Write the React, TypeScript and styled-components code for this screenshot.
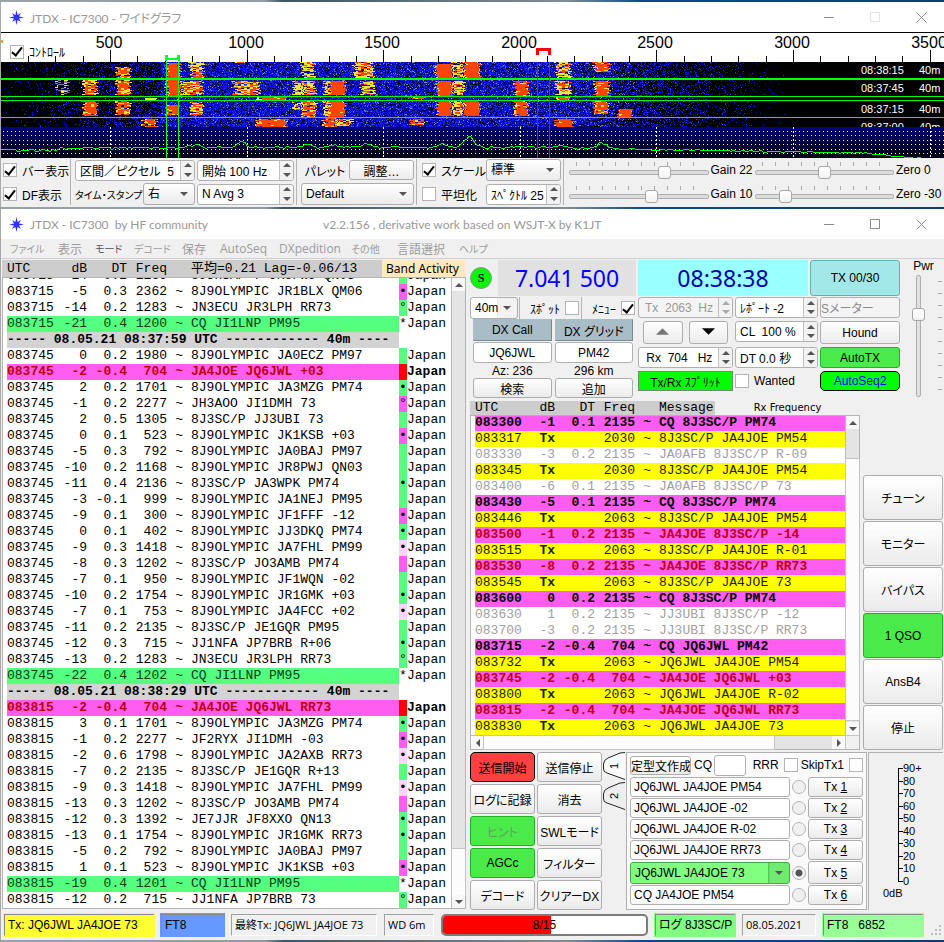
import React, { useState } from "react";
import styled, { createGlobalStyle, css } from "styled-components";

const UI = `"MS UI Gothic", "Liberation Sans", "Noto Sans CJK JP", sans-serif`;
const CAPTION = `"Segoe UI", "Open Sans", "Noto Sans CJK JP", sans-serif`;
const TITLE = `"Segoe UI", Lato, "Noto Sans CJK JP", sans-serif`;
const MONO = `"Courier New", "Liberation Mono", "Noto Sans CJK JP", monospace`;

const GlobalStyle = createGlobalStyle`
  * { box-sizing: border-box; }
  body { margin: 0; background: #3b4a5a; }
  body, button, input, select { font-family: ${UI}; font-size: 12px; font-feature-settings: "palt"; color: #000; }
`;

/* ---------- shell ---------- */

const Desktop = styled.div`
  height: 100vh;
  min-height: 900px;
  display: flex;
  flex-direction: column;
  gap: 2px;
  padding: 2px 0;
  background: linear-gradient(90deg, #9aa3a5 0%, #8f9da6 28%, #3e5568 30%, #7f8e96 60%, #0c4a8c 68%, #0f3c74 100%);
  overflow: hidden;
`;

const WindowFrame = styled.section<{ $grow?: boolean }>`
  display: flex;
  flex-direction: column;
  background: #f0f0f0;
  border-left: 1px solid #a8a8a8;
  min-height: 0;
  flex: ${(p) => (p.$grow ? "1" : "none")};
`;

const TitleBar = styled.header`
  display: grid;
  grid-template-columns: 15px minmax(0, 287px) 1fr auto;
  column-gap: 6px;
  align-items: center;
  height: 30px;
  padding-left: 8px;
  background: #fff;
  color: #999;
  font-family: ${TITLE};
  font-size: 12px;
  white-space: pre;
`;

const WinButtons = styled.div`
  display: flex;
`;

const WinButton = styled.button<{ $dim?: boolean }>`
  width: 46px;
  height: 28px;
  padding: 0;
  border: 0;
  background: none;
  display: grid;
  place-items: center;
  color: ${(p) => (p.$dim ? "#e4e4e4" : "#8a8a8a")};
`;

/* ---------- generic controls ---------- */

type Tone = "plain" | "green" | "lime" | "red" | "cyan" | "steel" | "split";

const tones: Record<Tone, ReturnType<typeof css>> = {
  plain: css`background: linear-gradient(#fff, #ebebeb); border-color: #adadad;`,
  green: css`background: #4aea4a; border-color: #22b322;`,
  lime: css`background: #00ff00; border-color: #000; color: #0000ff; border-radius: 5px;`,
  red: css`background: #ff4040; border-color: #000; border-radius: 5px;`,
  cyan: css`background: #a3e8e8; border-color: #5cb3b3;`,
  steel: css`background: #a9bdc6; border-color: #a9bdc6 #7b8a91 #7b8a91 #a9bdc6; border-radius: 0;`,
  split: css`background: #00ff00; border-color: #6b8f6b; border-radius: 0;`,
};

const PushButton = styled.button<{ $tone?: Tone; $faded?: boolean }>`
  min-width: 0;
  padding: 0;
  border: 1px solid;
  border-radius: 3px;
  white-space: nowrap;
  overflow: hidden;
  ${(p) => tones[p.$tone ?? "plain"]}
  ${(p) => p.$faded && css`color: #5fa35f;`}
`;

const TextBox = styled.input<{ $center?: boolean }>`
  width: 100%;
  min-width: 0;
  height: 21px;
  padding: 0 3px;
  border: 1px solid #b0b0b0;
  border-radius: 3px;
  background: #fff;
  text-align: ${(p) => (p.$center ? "center" : "left")};
  &:disabled { background: #f4f4f4; color: #8a8a8a; padding: 0; }
`;

const CheckInput = styled.input`
  appearance: none;
  flex: none;
  width: 14px;
  height: 14px;
  margin: 0;
  border: 1px solid #b4b4b4;
  background: #fff;
  display: grid;
  place-items: center;
  &:checked::after {
    content: "";
    width: 4px;
    height: 9px;
    margin-top: -2px;
    border: solid #000;
    border-width: 0 2px 2px 0;
    transform: rotate(38deg);
  }
`;

const CheckLabel = styled.label`
  display: flex;
  align-items: center;
  gap: 5px;
  white-space: nowrap;
`;

const SpinFrame = styled.div<{ $off?: boolean }>`
  display: flex;
  min-width: 0;
  height: 21px;
  border: 1px solid #b0b0b0;
  border-radius: 3px;
  background: ${(p) => (p.$off ? "#f4f4f4" : "#fff")};
  overflow: hidden;
`;

const SpinInput = styled.input`
  flex: 1;
  width: 0;
  min-width: 0;
  padding: 0 0 0 4px;
  border: 0;
  background: none;
  white-space: pre;
  &:disabled { color: #999; padding-left: 6px; }
`;

const Stepper = styled.div`
  width: 14px;
  flex: none;
  display: flex;
  flex-direction: column;
  border-left: 1px solid #c0c0c0;
  background: #f2f2f2;
`;

const StepButton = styled.button`
  flex: 1;
  padding: 0;
  border: 0;
  background: none;
  display: grid;
  place-items: center;
  line-height: 0;
`;

const Triangle = ({ dir, size = 8, color = "#555" }: { dir: "up" | "down" | "left" | "right"; size?: number; color?: string }) => {
  const shapes = { up: "M0 6 4 2 8 6z", down: "M0 2 4 6 8 2z", left: "M6 0 2 4 6 8z", right: "M2 0 6 4 2 8z" };
  return (
    <svg width={size} height={size} viewBox="0 0 8 8" aria-hidden="true">
      <path d={shapes[dir]} fill={color} />
    </svg>
  );
};

const Spin = ({ label, value, off }: { label: string; value: string; off?: boolean }) => (
  <SpinFrame $off={off}>
    <SpinInput aria-label={label} defaultValue={value} disabled={off} />
    <Stepper>
      <StepButton aria-label={`${label} +`}><Triangle dir="up" color={off ? "#aaa" : "#555"} /></StepButton>
      <StepButton aria-label={`${label} -`}><Triangle dir="down" color={off ? "#aaa" : "#555"} /></StepButton>
    </Stepper>
  </SpinFrame>
);

const SelectFrame = styled.div<{ $go?: boolean; $split?: boolean }>`
  display: grid;
  grid-template-columns: minmax(0, 1fr) 21px;
  align-items: center;
  height: 22px;
  min-width: 0;
  border: 1px solid ${(p) => (p.$go ? "#3fae3f" : "#adadad")};
  border-radius: 3px;
  background: ${(p) => (p.$split ? "linear-gradient(90deg, #fff 56%, #c0c0c0 56%, #f2f2f2 58%)" : "linear-gradient(#fff, #ebebeb)")};
  & > svg { grid-area: 1 / 2; justify-self: center; pointer-events: none; }
  ${(p) => p.$go && css`background: linear-gradient(90deg, #80ff80 87%, #52c852 87%, #70ea70 88%);`}
`;

const Select = styled.select`
  appearance: none;
  grid-area: 1 / 1 / 2 / 3;
  width: 100%;
  height: 100%;
  padding: 0 0 0 4px;
  border: 0;
  background: none;
`;

const Combo = ({ label, value, go, split }: { label: string; value: string; go?: boolean; split?: boolean }) => (
  <SelectFrame $go={go} $split={split}>
    <Select aria-label={label}><option>{value}</option></Select>
    <Triangle dir="down" />
  </SelectFrame>
);

/* ---------- wide graph ---------- */

const GraphSvg = styled.svg`
  display: block;
  width: 100%;
  height: 126px;
`;

const GraphArea = styled.div`
  position: relative;
  background: #fff;
`;

const GraphToggle = styled.div`
  position: absolute;
  left: 9px;
  top: 11px;
`;

const makeRng = (seed: number) => () => {
  seed = (seed * 1664525 + 1013904223) >>> 0;
  return seed / 4294967296;
};

const PALETTE = ["#000078", "#0a14dc", "#1e3cff", "#7c86a0", "#f0e43c", "#ff4600"];

type Blob = [x0: number, x1: number, y0: number, y1: number, heat: number];

const SIGNALS: Blob[] = [
  [115, 129, 67, 78, 0.8], [165, 179, 63, 79, 1], [189, 202, 62, 71, 0.4], [189, 202, 71, 78, 0.75], [301, 313, 62, 78, 0.4],
  [353, 372, 62, 78, 0.5], [434, 451, 64, 78, 1], [452, 462, 62, 78, 0.45], [463, 479, 62, 78, 1], [555, 569, 62, 78, 0.45],
  [593, 608, 62, 72, 0.9], [236, 246, 62, 63, 0.9],
  [55, 67, 80, 95, 0.15], [82, 96, 80, 95, 0.7], [115, 129, 80, 95, 0.8], [165, 179, 80, 96, 1], [180, 201, 81, 95, 0.6],
  [232, 258, 81, 95, 0.6], [292, 301, 81, 95, 0.4], [302, 314, 81, 95, 0.55], [323, 328, 81, 95, 0.5], [328, 344, 81, 95, 1],
  [360, 373, 81, 95, 0.45], [435, 451, 81, 96, 1], [452, 463, 81, 95, 0.45], [513, 527, 81, 96, 0.95], [555, 569, 81, 95, 0.5],
  [593, 608, 81, 96, 0.9],
  [256, 286, 97, 100, 0.85], [555, 569, 97, 100, 0.9], [410, 425, 97, 99, 0.8], [144, 156, 97, 100, 0.3],
  [82, 96, 101, 116, 0.88], [115, 129, 101, 115, 0.65], [165, 178, 105, 115, 0.98], [189, 202, 102, 115, 0.65], [292, 300, 102, 110, 0.4],
  [301, 315, 101, 117, 0.7], [323, 328, 101, 116, 0.5], [328, 344, 101, 117, 0.98], [436, 451, 101, 116, 1], [452, 462, 101, 116, 0.45],
  [463, 479, 101, 116, 1], [513, 527, 101, 116, 0.9], [593, 607, 101, 114, 0.9], [617, 631, 109, 117, 0.98],
  [142, 156, 119, 127, 0.92], [256, 286, 119, 127, 0.88], [323, 335, 118, 127, 0.85], [336, 351, 119, 126, 0.45],
  [410, 425, 119, 125, 0.75], [555, 573, 119, 127, 0.97],
];

const noiseLevel = (x: number) => {
  if (x < 160) return 0.03 + 0.45 * Math.pow(x / 160, 1.6);
  if (x < 570) return 0.88;
  if (x < 800) return 0.88 * Math.pow((800 - x) / 230, 1.7);
  return 0;
};

const buildWaterfall = () => {
  const rand = makeRng(7300);
  const runs: string[] = PALETTE.map(() => "");
  for (let y = 62; y < 127; y++) {
    const edge = Math.round(rand() * 4 - 2);
    let prev = -1;
    let start = 0;
    let warm = 0;
    for (let x = 0; x <= 943; x++) {
      let c = -1;
      const level = x < 943 ? noiseLevel(x) : 0;
      if (rand() < level) {
        const r = rand();
        c = r < 0.28 ? 0 : r < 0.82 ? 1 : r < 0.94 ? 2 : level > 0.5 ? 3 : 0;
      }
      if (x % 3 === 0) warm = rand();
      for (const [x0, x1, y0, y1, heat] of SIGNALS) {
        if (y < y0 || y >= y1 || x < x0 + edge || x >= x1 + edge) continue;
        const rim = Math.min(x - x0 - edge, x1 + edge - x) < 2 ? 0.3 : 0;
        const h = Math.pow(Math.max(0, heat - rim), 1.5);
        if (heat < 0.2) c = warm < 0.2 ? 4 : warm < 0.5 ? 3 : c;
        else if (warm < h) c = 5;
        else if (warm < h + (1 - h) * 0.75) c = 4;
      }
      if (c !== prev || x === 943) {
        if (prev >= 0) runs[prev] += `M${start} ${y}h${x - start}v1h-${x - start}z`;
        prev = c;
        start = x;
      }
    }
  }
  return runs;
};

const buildTrace = () => {
  const rand = makeRng(42);
  const peaks = [[194, 3, 6], [241, 6, 5], [308, 3, 5], [334, 2, 6], [366, 4, 5], [441, 3, 6], [468, 10, 7], [562, 3, 5], [601, 6, 6]];
  let d = "";
  for (let x = 0; x < 925; x += 2) {
    let y = x < 60 ? 150 : x < 560 ? 148 - Math.min(1, (x - 60) / 200) : 148 + ((x - 560) / 260) * 4;
    if (x > 860) y += (x - 860) / 12;
    for (const [px, h, w] of peaks) y -= h * Math.exp(-Math.pow((x - px) / w, 2));
    y += rand() * 2 - 1;
    d += `${d ? "L" : "M"}${x} ${Math.min(158, Math.round(y))}`;
  }
  return d;
};

const WATERFALL = buildWaterfall();
const TRACE = buildTrace();
const MAJORS = [500, 1000, 1500, 2000, 2500, 3000, 3500];
const hzToX = (hz: number) => Math.round(109 + ((hz - 500) * 136.6) / 500);
const TICKS = Array.from({ length: 34 }, (_, i) => 200 + i * 100);
const STAMPS: [string, number][] = [["08:38:15", 74], ["08:37:45", 92], ["08:37:15", 113], ["08:37:00", 131]];

const WideGraph = () => (
  <GraphSvg viewBox="0 32 943 126" preserveAspectRatio="none" role="img" aria-label="Waterfall">
    <defs>
      <linearGradient id="floor" x1="0" y1="0" x2="0" y2="1">
        <stop offset="0" stopColor="#00007c" />
        <stop offset="1" stopColor="#00000c" />
      </linearGradient>
      <clipPath id="fallClip"><rect x="0" y="62" width="943" height="65" /></clipPath>
    </defs>
    <rect x="0" y="32" width="943" height="30" fill="#fff" />
    <rect x="0" y="32" width="943" height="1" fill="#000" />
    <rect x="0" y="40" width="2" height="3" fill="#ff9c00" />
    <g fontFamily="Liberation Sans" fontSize="16" textAnchor="middle">
      {MAJORS.map((hz) => <text key={hz} x={hzToX(hz) - 1} y="48">{hz}</text>)}
    </g>
    <g shapeRendering="crispEdges">
      {TICKS.map((hz) => (
        <rect key={hz} x={hzToX(hz)} y={hz % 500 ? 56 : 50} width="1" height={hz % 500 ? 6 : 12} />
      ))}
      <rect x="0" y="62" width="943" height="65" fill="#000" />
      {WATERFALL.map((d, i) => <path key={i} d={d} fill={PALETTE[i]} />)}
      <rect x="0" y="127" width="943" height="31" fill="url(#floor)" />
      {[131, 135, 140, 144, 149, 153].map((y) => (
        <line key={y} x1="2" x2="943" y1={y + 0.5} y2={y + 0.5} stroke="#fff" strokeDasharray="1 3" />
      ))}
      {MAJORS.map((hz) => (
        <line key={hz} x1={hzToX(hz) + 0.5} x2={hzToX(hz) + 0.5} y1="127" y2="158" stroke="#fff" strokeDasharray="2 2" />
      ))}
      <path d={TRACE} fill="none" stroke="#00ff00" />
      <rect x="0" y="78" width="943" height="2" fill="#00ff00" />
      {[96, 100, 117].map((y) => <rect key={y} x="0" y={y} width="943" height="1" fill="#00ff00" />)}
      <path d="M164 61v-6h3v3h9v-3h3v6h-2v-1h-11v1z" fill="#00ff28" />
      <path d="M165 62h1v96h-1zM177 62h1v96h-1z" fill="#00ff00" />
      <path d="M535 55v-7h15v7h-3v-4h-9v4z" fill="#ff0000" />
      <path d="M536 62h1v96h-1zM548 62h1v96h-1z" fill="#d01818" />
    </g>
    <g clipPath="url(#fallClip)" fill="#fff" fontFamily="Liberation Sans" fontSize="11">
      {STAMPS.map(([t, y]) => (
        <React.Fragment key={t}>
          <text x="860" y={y}>{t}</text>
          <text x="918" y={y}>40m</text>
        </React.Fragment>
      ))}
    </g>
  </GraphSvg>
);

const GraphControls = styled.div`
  display: flex;
  padding: 1px 0 2px;
  height: 49px;
`;

const ControlGroup = styled.div<{ $cols: string; $pad: number }>`
  display: grid;
  grid-template-columns: ${(p) => p.$cols};
  grid-template-rows: 22px 22px;
  row-gap: 2px;
  column-gap: 2px;
  align-items: center;
  padding: 0 2px 0 ${(p) => p.$pad}px;
  border-left: 1px solid #b4b4b4;
  white-space: nowrap;
  &:first-child { border-left: 0; }
  &:last-child { flex: 1; }
`;

const SmallCaption = styled.span`
  font-size: 10px;
`;

const CenterCaption = styled.span`
  text-align: center;
`;

const Pair = styled.div<{ $cols: string }>`
  display: grid;
  grid-template-columns: ${(p) => p.$cols};
  align-items: center;
  & > button { height: 20px; }
`;

const SliderBox = styled.div`
  padding: 4px 0 0;
  background: repeating-linear-gradient(90deg, #aaa 0 1px, transparent 1px 13px) 7px 2px / calc(100% - 12px) 4px no-repeat;
`;

const thumb = css`
  appearance: none;
  width: 13px;
  height: 13px;
  border: 1px solid #a8a8a8;
  border-radius: 3px;
  background: linear-gradient(#fff, #f2f2f2);
`;

const Range = styled.input`
  appearance: none;
  display: block;
  width: 100%;
  height: 16px;
  margin: 0;
  background: none;
  &::-webkit-slider-runnable-track {
    height: 5px;
    border: 1px solid #b0b0b0;
    border-radius: 2px;
    background: #dcdcdc;
  }
  &::-webkit-slider-thumb { ${thumb} margin-top: -5px; }
`;

const Gain = ({ label, value }: { label: string; value: number }) => (
  <SliderBox><Range type="range" aria-label={label} min={0} max={100} defaultValue={value} /></SliderBox>
);

/* ---------- main window ---------- */

const MenuBar = styled.nav`
  display: grid;
  grid-template-columns: 48px 37px 39px 48px 38px 59px 72px 46px 62px 1fr;
  align-items: center;
  height: 20px;
  padding-left: 9px;
  border-bottom: 1px solid #d0d0d0;
  font-family: ${CAPTION};
  white-space: nowrap;
`;

const MenuItem = styled.button<{ $live?: boolean; $kana?: boolean }>`
  padding: 0;
  border: 0;
  background: none;
  text-align: left;
  font-family: inherit;
  font-size: ${(p) => (p.$kana ? 10 : 12)}px;
  color: ${(p) => (p.$live ? "#555" : "#9c9c9c")};
`;

const Body = styled.main`
  flex: 1;
  min-height: 0;
  display: grid;
  grid-template-columns: minmax(0, 1fr) 478px;
`;

const Column = styled.div`
  display: flex;
  flex-direction: column;
  min-height: 0;
  min-width: 0;
`;

const LogHead = styled.div<{ $narrow?: boolean }>`
  display: grid;
  grid-template-columns: 48px 32px 40px 40px 24px minmax(0, 1fr);
  align-items: center;
  height: ${(p) => (p.$narrow ? 14 : 17)}px;
  padding-left: 5px;
  background: #cdcdcd;
  font-family: ${MONO};
  font-size: 13px;
  line-height: 14px;
  white-space: pre;
  ${(p) => (p.$narrow ? css`width: 245px;` : css`flex: 1;`)}
`;

const HeadCell = styled.span<{ $right?: boolean }>`
  height: 14px;
  text-align: ${(p) => (p.$right ? "right" : "left")};
`;

const HeadRow = styled.div`
  display: flex;
  margin: 1px 1px 0 1px;
`;

const BandTag = styled.span`
  width: 83px;
  padding-left: 4px;
  background: #ffe9bd;
  font-family: "Noto Sans", sans-serif;
  font-size: 12px;
  line-height: 17px;
  white-space: nowrap;
`;

const LogBox = styled.div`
  flex: 1;
  min-height: 0;
  margin-left: 1px;
  display: grid;
  grid-template-columns: minmax(0, 1fr) 14px;
  grid-template-rows: minmax(0, 1fr) auto;
  border: 1px solid #b4b4b4;
  background: #fff;
`;

const LogView = styled.div`
  display: flex;
  flex-direction: column;
  justify-content: flex-end;
  min-height: 0;
  padding-left: 4px;
  overflow: hidden;
`;

const LogTable = styled.table`
  width: 100%;
  table-layout: fixed;
  border-collapse: collapse;
  font-family: ${MONO};
  font-size: 13px;
  line-height: 16px;
  white-space: pre;
`;

type Kind = "" | "cq" | "mine" | "call" | "tx" | "old" | "sep";

const kinds: Record<Kind, ReturnType<typeof css>> = {
  "": css``,
  cq: css`background: #55ff7f; color: #0c3c18;`,
  mine: css`background: #ff5df0; color: #c00010; font-weight: bold;`,
  call: css`background: #ff5df0; font-weight: bold;`,
  tx: css`background: #ffff00; color: #1c1c00;`,
  old: css`color: #a0a0a0;`,
  sep: css`background: #d3d3d3; font-weight: bold;`,
};

const Cell = styled.td<{ $kind: Kind; $left?: boolean; $bold?: boolean }>`
  height: 16px;
  padding: 0 0 0 ${(p) => (p.$left ? 8 : 0)}px;
  text-align: ${(p) => (p.$left || p.$kind === "sep" ? "left" : "right")};
  overflow: hidden;
  ${(p) => kinds[p.$kind]}
  ${(p) => p.$bold && css`font-weight: bold;`}
  &:first-child { text-align: left; }
`;

const markColors: Record<string, string> = { g: "#55ff7f", p: "#ff5df0", l: "#ffd5fb", r: "#ff0000", n: "#fff" };

const Mark = styled.td<{ $mark: string }>`
  padding: 0;
  background: ${(p) => markColors[p.$mark]};
`;

const Country = styled.td<{ $bold: boolean }>`
  padding: 0;
  font-weight: ${(p) => (p.$bold ? "bold" : "normal")};
`;

const BAND_LOG = `083715|-14|0.2|1169|8J3HSA/ 7 JR8PWJ QN03|g||
083715|-5|0.3|2362|8J9OLYMPIC JR1BLX QM06|p|•|
083715|-14|0.2|1283|JN3ECU JR3LPH RR73|g|°|
083715|-21|0.4|1200|CQ JI1LNP PM95|n|*|cq
----- 08.05.21 08:37:59 UTC ------------ 40m ----
083745|0|0.2|1980|8J9OLYMPIC JA0ECZ PM97|g||
083745|-2|-0.4|704|JA4JOE JQ6JWL +03|r||mine
083745|2|0.2|1701|8J9OLYMPIC JA3MZG PM74|g|•|
083745|-1|0.2|2277|JH3AOO JI1DMH 73|p|°|
083745|2|0.5|1305|8J3SC/P JJ3UBI 73|g||
083745|0|0.1|523|8J9OLYMPIC JK1KSB +03|p|•|
083745|-5|0.3|792|8J9OLYMPIC JA0BAJ PM97|g||
083745|-10|0.2|1168|8J9OLYMPIC JR8PWJ QN03|g||
083745|-11|0.4|2136|8J3SC/P JA3WPK PM74|g|•|
083745|-3|-0.1|999|8J9OLYMPIC JA1NEJ PM95|g||
083745|-9|0.1|300|8J9OLYMPIC JF1FFF -12|p|•|
083745|0|0.1|402|8J9OLYMPIC JJ3DKQ PM74|g|•|
083745|-9|0.3|1418|8J9OLYMPIC JA7FHL PM99|l|•|
083745|-8|0.3|1202|8J3SC/P JO3AMB PM74|p||
083745|-7|0.1|950|8J9OLYMPIC JF1WQN -02|g||
083745|-10|0.2|1754|8J9OLYMPIC JR1GMK +03|g|•|
083745|-7|0.1|753|8J9OLYMPIC JA4FCC +02|l|•|
083745|-11|0.2|2135|8J3SC/P JE1GQR PM95|g||
083745|-12|0.3|715|JJ1NFA JP7BRB R+06|g|•|
083745|-13|0.2|1283|JN3ECU JR3LPH RR73|g|°|
083745|-22|0.4|1202|CQ JI1LNP PM95|n|*|cq
----- 08.05.21 08:38:29 UTC ------------ 40m ----
083815|-2|-0.4|704|JA4JOE JQ6JWL RR73|r||mine
083815|3|0.1|1701|8J9OLYMPIC JA3MZG PM74|g|•|
083815|-1|0.2|2277|JF2RYX JI1DMH -03|p|•|
083815|-2|0.6|1798|8J9OLYMPIC JA2AXB RR73|l|•|
083815|-7|0.2|2135|8J3SC/P JE1GQR R+13|g||
083815|-9|0.3|1418|8J9OLYMPIC JA7FHL PM99|l|•|
083815|-13|0.3|1202|8J3SC/P JO3AMB PM74|p||
083815|-12|0.3|1392|JE7JJR JF8XXO QN13|g|•|
083815|-13|0.1|1754|8J9OLYMPIC JR1GMK RR73|g|•|
083815|-5|0.2|792|8J9OLYMPIC JA0BAJ PM97|g||
083815|1|0.1|523|8J9OLYMPIC JK1KSB +03|p|•|
083815|-19|0.4|1201|CQ JI1LNP PM95|n|*|cq
083815|-12|0.2|715|JJ1NFA JP7BRB 73|g|°|`.split("\n");

const RX_LOG = `083300|-1|0.1|2135|CQ 8J3SC/P PM74|||call
083317|Tx||2030|8J3SC/P JA4JOE PM54|||tx
083330|-3|0.2|2135|JA0AFB 8J3SC/P R-09|||old
083345|Tx||2030|8J3SC/P JA4JOE PM54|||tx
083400|-6|0.1|2135|JA0AFB 8J3SC/P 73|||old
083430|-5|0.1|2135|CQ 8J3SC/P PM74|||call
083446|Tx||2063|8J3SC/P JA4JOE PM54|||tx
083500|-1|0.2|2135|JA4JOE 8J3SC/P -14|||mine
083515|Tx||2063|8J3SC/P JA4JOE R-01|||tx
083530|-8|0.2|2135|JA4JOE 8J3SC/P RR73|||mine
083545|Tx||2063|8J3SC/P JA4JOE 73|||tx
083600|0|0.2|2135|CQ 8J3SC/P PM74|||call
083630|1|0.2|2135|JJ3UBI 8J3SC/P -12|||old
083700|-3|0.2|2135|JJ3UBI 8J3SC/P RR73|||old
083715|-2|-0.4|704|CQ JQ6JWL PM42|||call
083732|Tx||2063|JQ6JWL JA4JOE PM54|||tx
083745|-2|-0.4|704|JA4JOE JQ6JWL +03|||mine
083800|Tx||2063|JQ6JWL JA4JOE R-02|||tx
083815|-2|-0.4|704|JA4JOE JQ6JWL RR73|||mine
083830|Tx||2063|JQ6JWL JA4JOE 73|||tx`.split("\n");

const Log = ({ rows, label, country }: { rows: string[]; label: string; country?: boolean }) => (
  <LogTable aria-label={label}>
    <colgroup>
      <col width="48" /><col width="32" /><col width="40" /><col width="40" /><col width="16" /><col />
      {country && <><col width="8" /><col width="44" /></>}
    </colgroup>
    <tbody>
      {rows.map((row, i) => {
        const f = row.split("|");
        if (f.length === 1) return <tr key={i}><Cell $kind="sep" colSpan={6}>{row}</Cell></tr>;
        const kind = f[7] as Kind;
        return (
          <tr key={i}>
            <Cell $kind={kind}>{f[0]}</Cell>
            <Cell $kind={kind} $bold={kind === "tx"}>{f[1]}</Cell>
            <Cell $kind={kind}>{f[2]}</Cell>
            <Cell $kind={kind}>{f[3]}</Cell>
            <Cell $kind={kind}>~</Cell>
            <Cell $kind={kind} $left>{f[4]}</Cell>
            {country && <><Mark $mark={f[5]}>{f[6]}</Mark><Country $bold={kind === "mine"}>Japan</Country></>}
          </tr>
        );
      })}
    </tbody>
  </LogTable>
);

const Bar = styled.div<{ $flat?: boolean }>`
  display: flex;
  flex-direction: ${(p) => (p.$flat ? "row" : "column")};
  background: #e4e4e4;
  border: solid #bcbcbc;
  border-width: ${(p) => (p.$flat ? "1px 0 0 0" : "0 0 0 1px")};
`;

const BarButton = styled.button`
  flex: none;
  width: 13px;
  height: 13px;
  padding: 0;
  border: 0;
  background: #f8f8f8;
  display: grid;
  place-items: center;
`;

const BarPart = styled.div<{ $size: number; $thumb?: boolean }>`
  flex: ${(p) => p.$size} 1 0;
  ${(p) => p.$thumb && css`background: #fcfcfc; outline: 1px solid #c4c4c4;`}
`;

const BarCorner = styled.div`
  border: solid #c4c4c4;
  border-width: 1px 0 0 1px;
  background: #f0f0f0;
`;

const Scroll = ({ before, size, after, flat }: { before: number; size: number; after: number; flat?: boolean }) => (
  <Bar $flat={flat}>
    <BarButton aria-label={flat ? "left" : "up"}><Triangle dir={flat ? "left" : "up"} /></BarButton>
    <BarPart $size={before} />
    <BarPart $size={size} $thumb />
    <BarPart $size={after} />
    <BarButton aria-label={flat ? "right" : "down"}><Triangle dir={flat ? "right" : "down"} /></BarButton>
  </Bar>
);

const RightColumn = styled(Column)`
  padding-left: 4px;
`;

const Upper = styled.div`
  display: grid;
  grid-template-columns: minmax(0, 1fr) 42px;
  height: 140px;
`;

const DialRow = styled.div`
  display: grid;
  grid-template-columns: 26px 138px 170px 90px;
  column-gap: 2px;
  height: 38px;
  padding: 1px 0;
  align-items: stretch;
`;

const SyncLamp = styled.span`
  align-self: center;
  width: 22px;
  height: 22px;
  border: 1px solid #7f9f7f;
  border-radius: 50%;
  background: #0cf40c;
  font: bold 12px/20px "Liberation Serif", serif;
  text-align: center;
`;

const Readout = styled.output<{ $bg: string; $fg: string }>`
  display: grid;
  place-items: center;
  background: ${(p) => p.$bg};
  color: ${(p) => p.$fg};
  font-family: Tahoma, "Noto Sans", sans-serif;
  font-size: 23px;
  line-height: 36px;
`;

const Panels = styled.div`
  display: grid;
  grid-template-columns: 166px 95px 83px 80px;
  column-gap: 2px;
`;

const Stack = styled.div`
  display: grid;
  grid-template-rows: 21px 23px 21px 20px;
  row-gap: 3px;
`;

const StationStack = styled.div`
  display: grid;
  grid-template-rows: 21px 22px 21px 13px 20px;
  row-gap: 1px;
`;

const TopLine = styled.div`
  display: grid;
  grid-template-columns: 48px 61px 55px;
  column-gap: 1px;
  & > label { border-left: 1px solid #b4b4b4; justify-content: flex-end; padding-right: 1px; }
`;

const Twin = styled.div<{ $inset?: boolean }>`
  display: grid;
  grid-template-columns: 1fr 1fr;
  column-gap: ${(p) => (p.$inset ? 6 : 3)}px;
  padding: 0 ${(p) => (p.$inset ? 5 : 3)}px;
  text-align: center;
  line-height: 14px;
`;

const PowerColumn = styled.div`
  display: grid;
  grid-template-rows: 16px 1fr;
  padding-left: 1px;
  text-align: center;
`;

const PowerSlider = styled.div`
  padding-left: 8px;
  background: repeating-linear-gradient(#aaa 0 1px, transparent 1px 12px) 35px 6px / 4px calc(100% - 12px) no-repeat;
`;

const VRange = styled.input`
  appearance: none;
  writing-mode: vertical-lr;
  direction: rtl;
  display: block;
  width: 14px;
  height: 122px;
  margin: 0;
  background: none;
  &::-webkit-slider-runnable-track {
    width: 5px;
    border: 1px solid #b0b0b0;
    border-radius: 2px;
    background: #e0e0e0;
  }
  &::-webkit-slider-thumb { ${thumb} margin-left: -5px; }
`;

const Middle = styled.div`
  flex: 1;
  min-height: 0;
  display: grid;
  grid-template-columns: minmax(0, 1fr) 80px;
  column-gap: 3px;
  padding-right: 1px;
`;

const RxHead = styled.div`
  display: flex;
  align-items: center;
  margin: 2px 0 0;
`;

const RxTitle = styled.h2`
  flex: 1;
  margin: 0;
  font-family: "DejaVu Sans", sans-serif;
  font-size: 10px;
  font-weight: normal;
  line-height: 14px;
  text-align: center;
`;

const RxBox = styled(LogBox)`
  margin-left: 0;
`;

const SideButtons = styled.div`
  align-self: end;
  display: grid;
  grid-template-rows: repeat(6, 45px);
  row-gap: 1px;
`;

const Lower = styled.div`
  display: grid;
  grid-template-columns: 132px 22px minmax(0, 1fr) 75px;
  column-gap: 1px;
  height: 159px;
  padding: 2px 1px 0 0;
`;

const ActionGrid = styled.div`
  display: grid;
  grid-template-columns: 1fr 1fr;
  grid-template-rows: repeat(5, 1fr);
  gap: 2px;
`;

const TabButtons = styled.div`
  display: grid;
  grid-template-rows: 28px 28px;
  row-gap: 2px;
`;

const TabButton = styled.button`
  padding: 0;
  border: 0;
  background: none;
`;

const MessagePanel = styled.div`
  display: grid;
  grid-template-rows: 22px repeat(4, 20px) 23px 20px;
  row-gap: 1px;
  padding: 1px 3px 0;
  border: 1px solid #b0b0b0;
  background: #fafafa;
`;

const GenRow = styled.div`
  display: grid;
  grid-template-columns: 61px 17px 32px 1fr auto;
  column-gap: 3px;
  align-items: center;
  & > label:nth-of-type(2) { justify-content: flex-end; }
`;

const MessageRow = styled.div`
  display: grid;
  grid-template-columns: minmax(0, 1fr) 14px 55px;
  column-gap: 2px;
  align-items: center;
  & > button { height: 100%; }
  & > input[type="text"] { height: 100%; }
`;

const Radio = styled.input`
  appearance: none;
  width: 14px;
  height: 14px;
  margin: 0;
  border: 1px solid #b4b4b4;
  border-radius: 50%;
  background: #f0f0f0;
  &:checked { background: radial-gradient(#555 0 3px, #f4f4f4 4px); }
`;

const MeterPanel = styled.div`
  border: solid #b0b0b0;
  border-width: 1px 0 0 1px;
`;

const StatusBar = styled.footer`
  display: grid;
  grid-template-columns: 150px 63px 146px 50px minmax(100px, 207px) 80px 74px 100px 1fr;
  column-gap: 7px;
  height: 31px;
  padding: 5px 2px 4px 3px;
`;

const StatusCell = styled.div<{ $bg?: string; $caption?: boolean }>`
  padding-left: 3px;
  border: 1px solid;
  border-color: #a0a0a0 #fff #fff #a0a0a0;
  background: ${(p) => p.$bg ?? "transparent"};
  ${(p) => p.$bg && css`border-color: #8a8a8a ${p.$bg} ${p.$bg} #8a8a8a; outline: 1px solid ${p.$bg};`}
  font-family: ${(p) => (p.$caption ? CAPTION : UI)};
  font-size: ${(p) => (p.$caption ? 11 : 12)}px;
  line-height: 20px;
  white-space: pre;
  overflow: hidden;
`;

const Progress = styled.div`
  position: relative;
  border: 2px solid #7c7c7c;
  border-radius: 5px;
  background: #fff;
  overflow: hidden;
`;

const ProgressFill = styled.div`
  height: 100%;
  background: #ff0000;
`;

const ProgressText = styled.span`
  position: absolute;
  inset: 0;
  line-height: 18px;
  text-align: center;
`;

const Grip = styled.svg`
  align-self: end;
  justify-self: end;
`;

/* ---------- drawings ---------- */

const StarIcon = () => (
  <svg width="15" height="15" viewBox="0 0 15 15" aria-hidden="true">
    <path d="M7.5 0 8.600 5 12 3 10 6.400 15 7.500 10 8.600 12 12 8.600 10 7.500 15 6.400 10 3 12 5 8.600 0 7.500 5 6.400 3 3 6.400 5z" fill="#3030ff" />
  </svg>
);

const WindowControls = ({ fixed }: { fixed?: boolean }) => (
  <WinButtons>
    <WinButton aria-label="最小化"><svg width="11" height="11"><path d="M0 5.500h10" stroke="currentColor" /></svg></WinButton>
    <WinButton aria-label="最大化" $dim={fixed} disabled={fixed}><svg width="11" height="11"><path d="M.5 .5h9v9h-9z" fill="none" stroke="currentColor" /></svg></WinButton>
    <WinButton aria-label="閉じる"><svg width="11" height="11"><path d="M.5 .5l10 10M10.500 .5l-10 10" stroke="currentColor" /></svg></WinButton>
  </WinButtons>
);

const TabShape = ({ n }: { n: number }) => (
  <svg width="22" height="28" viewBox="0 0 22 28" aria-hidden="true">
    <path d="M22 .5 17 1 5 6Q.5 8 .5 12V17Q.5 20 4 21L22 27.500" fill={n === 1 ? "#fafafa" : "#eee"} stroke="#222" />
    <text x="11" y="14" fontSize="11" textAnchor="middle" dominantBaseline="central" transform="rotate(-90 11 14)">{n}</text>
  </svg>
);

const MeterScale = () => (
  <svg width="73" height="154" viewBox="0 0 73 154" aria-hidden="true">
    <path d="M29.500 15v113" stroke="#000" />
    {[90, 80, 70, 60, 50, 40, 30, 20, 10, 0].map((v, i) => {
      const y = Math.round(15 + i * 12.5);
      return (
        <g key={v}>
          <path d={`M29 ${y + 0.5}h5`} stroke="#000" />
          <text x="34" y={y + 4} fontSize="11">{v === 90 ? "90+" : v}</text>
        </g>
      );
    })}
    <text x="14" y="144" fontSize="11">0dB</text>
  </svg>
);

/* ---------- data ---------- */

const MENUS: [string, boolean, boolean][] = [
  ["ファイル", false, true], ["表示", false, false], ["モード", true, true], ["デコード", false, true], ["保存", false, false],
  ["AutoSeq", false, false], ["DXpedition", false, false], ["その他", false, true], ["言語選択", false, false], ["ヘルプ", false, true],
];

const ACTIONS: [string, Tone, boolean][] = [
  ["送信開始", "red", false], ["送信停止", "plain", false], ["ログに記録", "plain", false], ["消去", "plain", false],
  ["ヒント", "green", true], ["SWLモード", "plain", false], ["AGCc", "green", false], ["フィルター", "plain", false],
  ["デコード", "plain", false], ["クリアーDX", "plain", false],
];

const SIDE: [string, Tone][] = [
  ["チューン", "plain"], ["モニター", "plain"], ["バイパス", "plain"], ["1 QSO", "green"], ["AnsB4", "plain"], ["停止", "plain"],
];

const MESSAGES = ["JQ6JWL JA4JOE PM54", "JQ6JWL JA4JOE -02", "JQ6JWL JA4JOE R-02", "JQ6JWL JA4JOE RR73", "JQ6JWL JA4JOE 73", "CQ JA4JOE PM54"];

const PERIOD = { elapsed: 8, total: 15 };

const Check = ({ text, on, lead }: { text: string; on?: boolean; lead?: boolean }) => (
  <CheckLabel>
    {lead && text}
    <CheckInput type="checkbox" defaultChecked={on} />
    {!lead && text}
  </CheckLabel>
);

export default function App() {
  const [next, setNext] = useState(4);
  return (
    <Desktop>
      <GlobalStyle />
      <WindowFrame>
        <TitleBar><StarIcon /><span>JTDX - IC7300 - ワイドグラフ</span><span /><WindowControls fixed /></TitleBar>
        <GraphArea>
          <WideGraph />
          <GraphToggle><Check text="ｺﾝﾄﾛｰﾙ" on /></GraphToggle>
        </GraphArea>
        <GraphControls>
          <ControlGroup $cols="65px" $pad={2}>
            <Check text="バー表示" on />
            <Check text="DF表示" on />
          </ControlGroup>
          <ControlGroup $cols="120px 97px" $pad={4}>
            <Spin label="区間／ピクセル" value="区間／ピクセル  5" />
            <Spin label="開始" value="開始 100 Hz" />
            <Pair $cols="68px 52px"><SmallCaption>タイム・スタンプ</SmallCaption><Combo label="タイム・スタンプ" value="右" /></Pair>
            <Spin label="N Avg" value="N Avg 3" />
          </ControlGroup>
          <ControlGroup $cols="113px" $pad={4}>
            <Pair $cols="48px 65px"><CenterCaption>パレット</CenterCaption><PushButton>調整…</PushButton></Pair>
            <Combo label="パレット" value="Default" />
          </ControlGroup>
          <ControlGroup $cols="62px 75px" $pad={5}>
            <Check text="スケール" on />
            <Combo label="表示種別" value="標準" />
            <Check text="平坦化" />
            <Spin label="ｽﾍﾟｸﾄﾙ" value="ｽﾍﾟｸﾄﾙ 25" />
          </ControlGroup>
          <ControlGroup $cols="minmax(0, 140px) 42px minmax(0, 140px) 46px" $pad={5}>
            <Gain label="Gain" value={71} /><span>Gain 22</span><Gain label="Zero" value={50} /><span>Zero 0</span>
            <Gain label="Gain 2" value={60} /><span>Gain 10</span><Gain label="Zero 2" value={19} /><span>Zero -30</span>
          </ControlGroup>
        </GraphControls>
      </WindowFrame>

      <WindowFrame $grow>
        <TitleBar>
          <StarIcon />
          <span>{"JTDX - IC7300  by HF community"}</span>
          <span>v2.2.156 , derivative work based on WSJT-X by K1JT</span>
          <WindowControls />
        </TitleBar>
        <MenuBar>
          {MENUS.map(([name, live, kana]) => <MenuItem key={name} $live={live} $kana={kana}>{name}</MenuItem>)}
        </MenuBar>
        <Body>
          <Column>
            <HeadRow>
              <LogHead>
                <HeadCell>UTC</HeadCell><HeadCell $right>dB</HeadCell><HeadCell $right>DT</HeadCell><HeadCell $right>Freq</HeadCell>
                <span /><HeadCell>平均=0.21 Lag=-0.06/13</HeadCell>
              </LogHead>
              <BandTag>Band Activity</BandTag>
            </HeadRow>
            <LogBox>
              <LogView><Log rows={BAND_LOG} label="Band Activity" country /></LogView>
              <Scroll before={556} size={46} after={0} />
            </LogBox>
          </Column>
          <RightColumn>
            <Upper>
              <div>
                <DialRow>
                  <SyncLamp>S</SyncLamp>
                  <Readout $bg="#e1e1e1" $fg="#0000ff">7.041 500</Readout>
                  <Readout $bg="#99ffff" $fg="#0000a8">08:38:38</Readout>
                  <PushButton $tone="cyan">TX 00/30</PushButton>
                </DialRow>
                <Panels>
                  <StationStack>
                    <TopLine><Combo label="バンド" value="40m" split /><Check text="ｽﾎﾟｯﾄ" lead /><Check text="ﾒﾆｭｰ" lead on /></TopLine>
                    <Twin><PushButton $tone="steel">DX Call</PushButton><PushButton $tone="steel">DX グリッド</PushButton></Twin>
                    <Twin><TextBox $center aria-label="DX Call" defaultValue="JQ6JWL" /><TextBox $center aria-label="DX グリッド" defaultValue="PM42" /></Twin>
                    <Twin><span>Az: 236</span><span>296 km</span></Twin>
                    <Twin><PushButton>検索</PushButton><PushButton>追加</PushButton></Twin>
                  </StationStack>
                  <Stack>
                    <Spin label="Tx" value="Tx  2063  Hz" off />
                    <Twin $inset>
                      <PushButton aria-label="Rx → Tx"><Triangle dir="up" size={13} color="#777" /></PushButton>
                      <PushButton aria-label="Tx → Rx"><Triangle dir="down" size={13} color="#000" /></PushButton>
                    </Twin>
                    <Spin label="Rx" value=" Rx  704   Hz" />
                    <PushButton $tone="split">Tx/Rx ｽﾌﾟﾘｯﾄ</PushButton>
                  </Stack>
                  <Stack>
                    <Spin label="ﾚﾎﾟｰﾄ" value="ﾚﾎﾟｰﾄ -2" />
                    <Spin label="CL" value="CL  100 %" />
                    <Spin label="DT" value="DT 0.0 秒" />
                    <Check text="Wanted" />
                  </Stack>
                  <Stack>
                    <TextBox aria-label="Sメーター" defaultValue="Sメーター" disabled />
                    <PushButton>Hound</PushButton>
                    <PushButton $tone="green">AutoTX</PushButton>
                    <PushButton $tone="lime">AutoSeq2</PushButton>
                  </Stack>
                </Panels>
              </div>
              <PowerColumn>
                <span>Pwr</span>
                <PowerSlider><VRange type="range" aria-label="Pwr" min={0} max={100} defaultValue={70} /></PowerSlider>
              </PowerColumn>
            </Upper>
            <Middle>
              <Column>
                <RxHead>
                  <LogHead $narrow>
                    <HeadCell>UTC</HeadCell><HeadCell $right>dB</HeadCell><HeadCell $right>DT</HeadCell><HeadCell $right>Freq</HeadCell>
                    <span /><HeadCell>Message</HeadCell>
                  </LogHead>
                  <RxTitle>Rx Frequency</RxTitle>
                </RxHead>
                <RxBox>
                  <LogView><Log rows={RX_LOG} label="Rx Frequency" /></LogView>
                  <Scroll before={30} size={257} after={2} />
                  <Scroll before={0} size={289} after={58} flat />
                  <BarCorner />
                </RxBox>
              </Column>
              <SideButtons>
                {SIDE.map(([name, tone]) => <PushButton key={name} $tone={tone}>{name}</PushButton>)}
              </SideButtons>
            </Middle>
            <Lower>
              <ActionGrid>
                {ACTIONS.map(([name, tone, faded]) => <PushButton key={name} $tone={tone} $faded={faded}>{name}</PushButton>)}
              </ActionGrid>
              <TabButtons>
                <TabButton aria-label="タブ 1"><TabShape n={1} /></TabButton>
                <TabButton aria-label="タブ 2"><TabShape n={2} /></TabButton>
              </TabButtons>
              <MessagePanel>
                <GenRow>
                  <PushButton>定型文作成</PushButton>
                  <label htmlFor="cq">CQ</label>
                  <TextBox id="cq" />
                  <Check text="RRR" lead />
                  <Check text="SkipTx1" lead />
                </GenRow>
                {MESSAGES.map((m, i) => (
                  <MessageRow key={m}>
                    {i === 4 ? <Combo label="Tx 5" value={m} go /> : <TextBox type="text" aria-label={`Tx ${i + 1}`} defaultValue={m} />}
                    <Radio type="radio" name="next" aria-label={`Tx ${i + 1}`} checked={next === i} onChange={() => setNext(i)} />
                    <PushButton>Tx <u>{i + 1}</u></PushButton>
                  </MessageRow>
                ))}
              </MessagePanel>
              <MeterPanel><MeterScale /></MeterPanel>
            </Lower>
          </RightColumn>
        </Body>
        <StatusBar>
          <StatusCell $bg="#ffff33">Tx: JQ6JWL JA4JOE 73</StatusCell>
          <StatusCell $bg="#6699ff">FT8</StatusCell>
          <StatusCell $caption>最終Tx: JQ6JWL JA4JOE 73</StatusCell>
          <StatusCell $caption>WD 6m</StatusCell>
          <Progress role="progressbar" aria-label="Period" aria-valuenow={PERIOD.elapsed} aria-valuemax={PERIOD.total}>
            <ProgressFill style={{ width: `${(PERIOD.elapsed / PERIOD.total) * 100}%` }} />
            <ProgressText>{PERIOD.elapsed}/{PERIOD.total}</ProgressText>
          </Progress>
          <StatusCell $bg="#80ff80">ログ 8J3SC/P</StatusCell>
          <StatusCell $caption>08.05.2021</StatusCell>
          <StatusCell $bg="#99ff99">{"FT8   6852"}</StatusCell>
          <Grip width="12" height="12" aria-hidden="true">
            <path d="M9 1h2v2h-2zM5 5h2v2h-2zM9 5h2v2h-2zM1 9h2v2h-2zM5 9h2v2h-2zM9 9h2v2h-2z" fill="#c0c0c0" />
          </Grip>
        </StatusBar>
      </WindowFrame>
    </Desktop>
  );
}
